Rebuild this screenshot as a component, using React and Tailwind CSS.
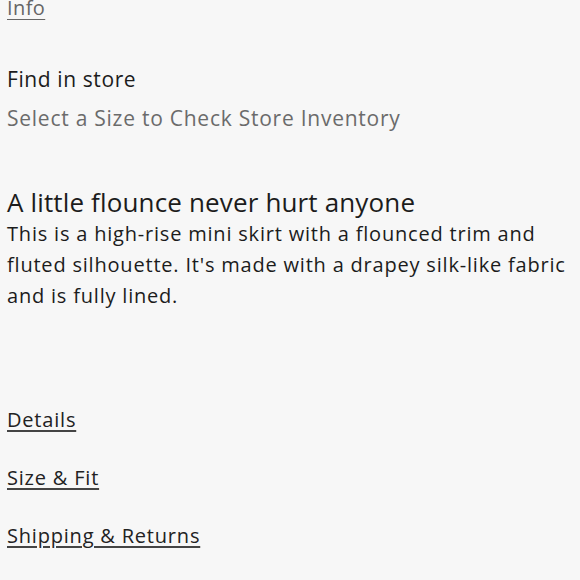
import React from 'react'

const links = ['Details', 'Size & Fit', 'Shipping & Returns']

export default function App() {
  return (
    <div className="w-[580px] h-[580px] overflow-hidden bg-[#f7f7f7] text-[#1c1c1c] px-[7px] font-['Open_Sans',sans-serif]">
      {/* info link, cut off at the top */}
      <div className="-mt-[7px] h-[30px] leading-[30px] text-[20px] tracking-[0.4px] text-[#666] underline underline-offset-[4px] decoration-1">
        Info
      </div>

      <div className="mt-[41px]">
        <div className="h-[30px] leading-[30px] text-[21px] tracking-[0.6px]">Find in store</div>
        <div className="mt-[9px] h-[30px] leading-[30px] text-[21px] tracking-[0.75px] text-[#6b6b6b]">
          Select a Size to Check Store Inventory
        </div>
      </div>

      <div className="mt-[53px]">
        <h2 className="h-[32px] leading-[32px] text-[26px] tracking-[0.15px]">A little flounce never hurt anyone</h2>
        <p className="text-[20px] leading-[31px] tracking-[0.8px]">
          This is a high-rise mini skirt with a flounced trim and fluted silhouette. It's made with a drapey
          silk-like fabric and is fully lined.
        </p>
      </div>

      <div className="mt-[94px] flex flex-col gap-[28px]">
        {links.map((l) => (
          <a key={l} className="h-[30px] leading-[30px] text-[20px] tracking-[0.8px] text-[#222] underline underline-offset-[3px] decoration-2 decoration-[#444]">
            {l}
          </a>
        ))}
      </div>
    </div>
  )
}
